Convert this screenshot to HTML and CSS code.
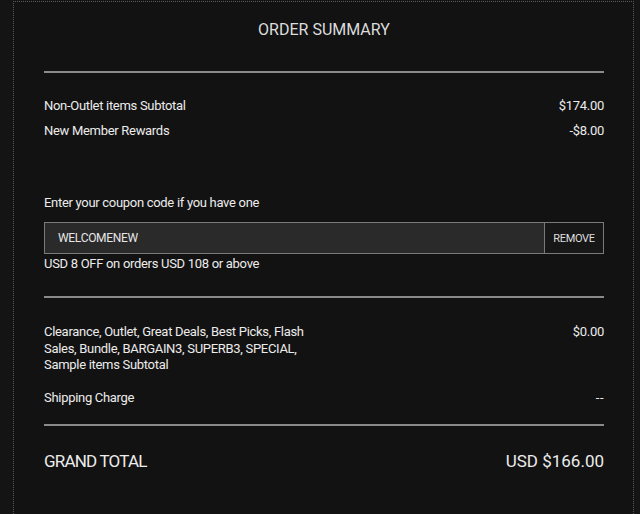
FILE: index.html
```html
<!DOCTYPE html>
<html lang="en">
<head>
<meta charset="utf-8">
<title>Order Summary</title>
<link rel="stylesheet" href="styles.css">
</head>
<body>
<section class="panel">
  <h2 class="title">ORDER SUMMARY</h2>
  <hr class="rule rule-top">
  <div class="rows">
    <div class="row"><span>Non-Outlet items Subtotal</span><span>$174.00</span></div>
    <div class="row"><span>New Member Rewards</span><span>-$8.00</span></div>
  </div>
  <div class="coupon">
    <label class="coupon-label" for="coupon">Enter your coupon code if you have one</label>
    <div class="coupon-box">
      <input id="coupon" class="coupon-input" type="text" value="WELCOMENEW">
      <button class="coupon-btn" type="button">REMOVE</button>
    </div>
    <p class="coupon-note">USD 8 OFF on orders USD 108 or above</p>
  </div>
  <hr class="rule rule-mid">
  <div class="row row-multi"><span class="multi-label">Clearance, Outlet, Great Deals, Best Picks, Flash Sales, Bundle, BARGAIN3, SUPERB3, SPECIAL, Sample items Subtotal</span><span>$0.00</span></div>
  <div class="row row-ship"><span>Shipping Charge</span><span class="dashes">--</span></div>
  <hr class="rule rule-bottom">
  <div class="total"><span class="total-label">GRAND TOTAL</span><span class="total-value">USD $166.00</span></div>
</section>
</body>
</html>
```

FILE: styles.css
```css
html, body {
  margin: 0;
  padding: 0;
  background: #141414;
  height: 100%;
}
body {
  font-family: Roboto, "Liberation Sans", sans-serif;
  color: #ececec;
  font-size: 13px;
  letter-spacing: -0.3px;
}
.panel {
  box-sizing: border-box;
  margin: 1px 6px 0 13px;
  min-height: 513px;
  border: 1px dotted #5a5a5a;
  border-bottom: none;
  background: #121212;
  padding: 18px 29px 0 30px;
}
.title {
  margin: 0;
  text-align: center;
  font-weight: 400;
  font-size: 16px;
  line-height: 20px;
  letter-spacing: 0;
  color: #dcdcdc;
}
.rule {
  margin: 0;
  border: none;
  height: 2px;
  background: #8a8a8a;
}
.rule-top { margin-top: 31px; }
.rows { margin-top: 20px; }
.row {
  display: flex;
  justify-content: space-between;
  align-items: flex-start;
  line-height: 25px;
}
.coupon { margin-top: 51px; }
.coupon-label {
  display: block;
  line-height: 18px;
}
.coupon-box {
  display: flex;
  margin-top: 10px;
  height: 32px;
  box-sizing: border-box;
  border: 1px solid #7a7a7a;
}
.coupon-input {
  flex: 1;
  min-width: 0;
  border: none;
  outline: none;
  background: #2a2a2a;
  color: #e6e6e6;
  font: inherit;
  letter-spacing: -0.3px;
  font-size: 12px;
  padding: 0 0 0 13px;
}
.coupon-btn {
  width: 59px;
  border: none;
  border-left: 1px solid #7a7a7a;
  background: #171717;
  color: #dedede;
  font: inherit;
  font-size: 11px;
  letter-spacing: -0.3px;
  padding: 0;
}
.coupon-note {
  margin: 1px 0 0;
  line-height: 18px;
}
.rule-mid { margin-top: 23px; }
.row-multi {
  margin-top: 26px;
  line-height: 16.5px;
}
.multi-label { max-width: 265px; }
.row-ship {
  margin-top: 15px;
  line-height: 18px;
}
.dashes { letter-spacing: 0.5px; }
.rule-bottom { margin-top: 17px; }
.total {
  display: flex;
  justify-content: space-between;
  margin-top: 24px;
  font-size: 17px;
  line-height: 22px;
}
.total-label { letter-spacing: -0.8px; }
.total-value { letter-spacing: 0; }
```
